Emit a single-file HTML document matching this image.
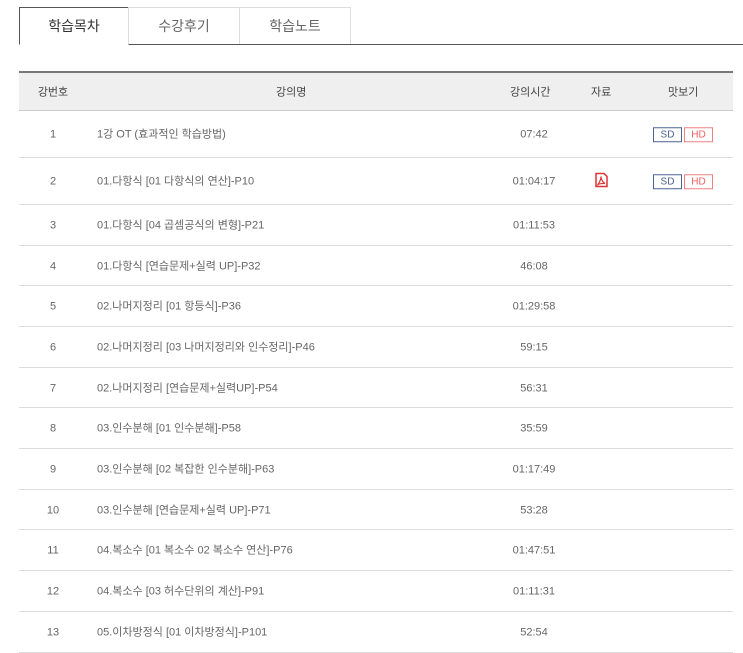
<!DOCTYPE html>
<html><head><meta charset="utf-8"><style>
body{margin:0;background:#fff;font-family:"Liberation Sans","Noto Sans CJK KR",sans-serif;color:#555;width:743px;height:653px;overflow:hidden;position:relative}
.tabs{position:absolute;left:19px;top:7px;width:724px;height:37px;border-bottom:1px solid #555}
.tab{position:absolute;top:0;height:37px;border:1px solid #ddd;border-bottom:none;box-sizing:border-box;text-align:center;line-height:36px;font-size:14px;color:#666;background:#fff}
.tab.a{border:1px solid #555;border-bottom:1px solid #fff;height:38px;color:#333}
.hd{position:absolute;left:19px;top:71px;width:714px;height:40px;box-sizing:border-box;background:#efefef;border-top:2px solid #777;border-bottom:1px solid #ccc;font-size:11px;color:#444}
.r{position:absolute;left:19px;width:714px;box-sizing:border-box;border-bottom:1px solid #ddd;font-size:11px;color:#666}
.hd span,.r span{position:absolute;top:50%;transform:translateY(-45%);white-space:nowrap;line-height:14px}
.n{left:34px;width:0;display:flex;justify-content:center}
.nm{left:78px}
.tm{left:515px;width:0;display:flex;justify-content:center}
.b{display:inline-block;width:27px;height:13px;line-height:13px;font-size:10px;border:1px solid #4a6291;color:#4a6291;text-align:center;margin:0 1px}
.b.h{border-color:#f08080;color:#f06060}
</style></head><body>
<div class="tabs">
<div class="tab a" style="left:0;width:110px">학습목차</div>
<div class="tab" style="left:109px;width:112px">수강후기</div>
<div class="tab" style="left:220px;width:112px">학습노트</div>
</div>
<div class="hd"><span class="n"><i style="font-style:normal">강번호</i></span><span style="left:257px">강의명</span><span style="left:491px">강의시간</span><span style="left:572px">자료</span><span style="left:649px">맛보기</span></div>

<div class="r" style="top:111px;height:47px"><span class="n"><i style="font-style:normal">1</i></span><span class="nm">1강 OT (효과적인 학습방법)</span><span class="tm"><i style="font-style:normal">07:42</i></span><span style="left:633px"><b class="b" style="font-weight:normal">SD</b><b class="b h" style="font-weight:normal">HD</b></span></div>
<div class="r" style="top:158px;height:47px"><span class="n"><i style="font-style:normal">2</i></span><span class="nm">01.다항식 [01 다항식의 연산]-P10</span><span class="tm"><i style="font-style:normal">01:04:17</i></span><span style="left:576px"><svg width="13" height="15" viewBox="0 0 13 15"><path d="M1 1h8l3 3v10H1z" fill="#fff" stroke="#d33" stroke-width="1.5"/><path d="M3 12c2-3 3-6 3-8 0 3 2 6 4 7-3 0-5 0-7 1z" fill="none" stroke="#d33" stroke-width="1.2"/></svg></span><span style="left:633px"><b class="b" style="font-weight:normal">SD</b><b class="b h" style="font-weight:normal">HD</b></span></div>
<div class="r" style="top:205px;height:41px"><span class="n"><i style="font-style:normal">3</i></span><span class="nm">01.다항식 [04 곱셈공식의 변형]-P21</span><span class="tm"><i style="font-style:normal">01:11:53</i></span></div>
<div class="r" style="top:246px;height:40px"><span class="n"><i style="font-style:normal">4</i></span><span class="nm">01.다항식 [연습문제+실력 UP]-P32</span><span class="tm"><i style="font-style:normal">46:08</i></span></div>
<div class="r" style="top:286px;height:41px"><span class="n"><i style="font-style:normal">5</i></span><span class="nm">02.나머지정리 [01 항등식]-P36</span><span class="tm"><i style="font-style:normal">01:29:58</i></span></div>
<div class="r" style="top:327px;height:41px"><span class="n"><i style="font-style:normal">6</i></span><span class="nm">02.나머지정리 [03 나머지정리와 인수정리]-P46</span><span class="tm"><i style="font-style:normal">59:15</i></span></div>
<div class="r" style="top:368px;height:40px"><span class="n"><i style="font-style:normal">7</i></span><span class="nm">02.나머지정리 [연습문제+실력UP]-P54</span><span class="tm"><i style="font-style:normal">56:31</i></span></div>
<div class="r" style="top:408px;height:41px"><span class="n"><i style="font-style:normal">8</i></span><span class="nm">03.인수분해 [01 인수분해]-P58</span><span class="tm"><i style="font-style:normal">35:59</i></span></div>
<div class="r" style="top:449px;height:41px"><span class="n"><i style="font-style:normal">9</i></span><span class="nm">03.인수분해 [02 복잡한 인수분해]-P63</span><span class="tm"><i style="font-style:normal">01:17:49</i></span></div>
<div class="r" style="top:490px;height:40px"><span class="n"><i style="font-style:normal">10</i></span><span class="nm">03.인수분해 [연습문제+실력 UP]-P71</span><span class="tm"><i style="font-style:normal">53:28</i></span></div>
<div class="r" style="top:530px;height:41px"><span class="n"><i style="font-style:normal">11</i></span><span class="nm">04.복소수 [01 복소수 02 복소수 연산]-P76</span><span class="tm"><i style="font-style:normal">01:47:51</i></span></div>
<div class="r" style="top:571px;height:41px"><span class="n"><i style="font-style:normal">12</i></span><span class="nm">04.복소수 [03 허수단위의 계산]-P91</span><span class="tm"><i style="font-style:normal">01:11:31</i></span></div>
<div class="r" style="top:612px;height:41px"><span class="n"><i style="font-style:normal">13</i></span><span class="nm">05.이차방정식 [01 이차방정식]-P101</span><span class="tm"><i style="font-style:normal">52:54</i></span></div>
</body></html>
